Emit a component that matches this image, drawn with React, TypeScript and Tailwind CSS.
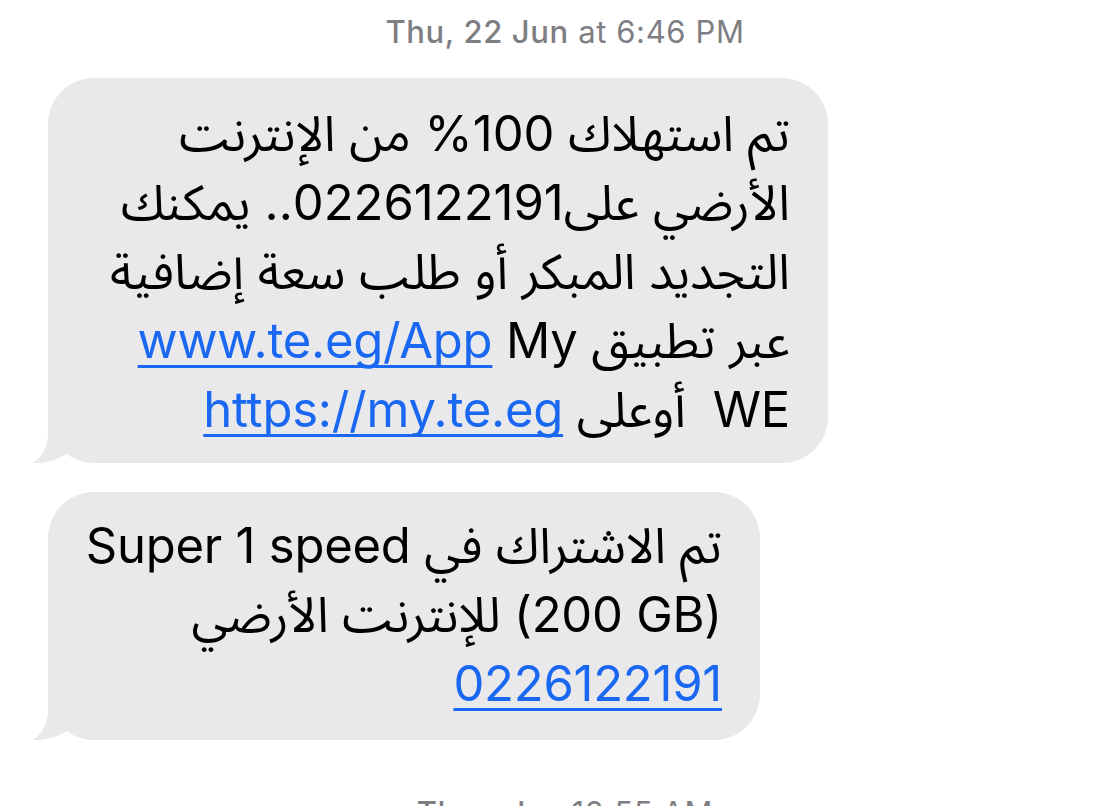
import React from 'react';

const BUBBLE = '#e9e9eb';

const Tail: React.FC = () => (
  <svg
    className="absolute -left-[20px] bottom-0"
    width="40"
    height="50"
    viewBox="0 0 40 50"
    aria-hidden="true"
  >
    <path d="M20 0 L20 20 C20 34 14 44 5 50 C17 50.5 30 47 40 40 L40 0 Z" fill={BUBBLE} />
  </svg>
);

const Link: React.FC<{ children: React.ReactNode }> = ({ children }) => (
  <a className="text-[#1a68f2] underline decoration-[3px] underline-offset-[7px] [text-decoration-skip-ink:none]">
    {children}
  </a>
);

const Stamp: React.FC<{ day: string; time: string }> = ({ day, time }) => (
  <div className="flex justify-center pl-[30px] text-[31px] leading-[36px] text-[#7e7e83] tracking-[0.02em]">
    <span className="font-medium">{day}</span>
    <span>&nbsp;{time}</span>
  </div>
);

const Bubble: React.FC<{ width: string; children: React.ReactNode; className?: string }> = ({
  width,
  children,
  className = '',
}) => (
  <div className={`relative ml-[48px] rounded-[46px] bg-[#e9e9eb] ${width} ${className}`}>
    <Tail />
    <div className="relative pr-[38px] text-[49px] leading-[69px] text-black tracking-[-0.005em]">{children}</div>
  </div>
);

export default function App() {
  return (
    <div
      className="h-[806px] w-[1100px] overflow-hidden bg-white pt-[14px]"
      style={{ fontFamily: 'Inter, "Noto Sans Arabic", "Noto Naskh Arabic", "DejaVu Sans", sans-serif' }}
    >
      <Stamp day="Thu, 22 Jun" time="at 6:46 PM" />

      <Bubble width="w-[780px]" className="mt-[28px] pt-[21px] pb-[19px]">
        <div dir="rtl" className="whitespace-nowrap">تم استهلاك 100% من الإنترنت</div>
        <div dir="rtl" className="whitespace-nowrap">الأرضي على0226122191.. يمكنك</div>
        <div dir="rtl" className="whitespace-nowrap">التجديد المبكر أو طلب سعة إضافية</div>
        <div dir="rtl" className="whitespace-nowrap">
          عبر تطبيق <bdi>My</bdi> <bdi><Link>www.te.eg/App</Link></bdi>
        </div>
        <div dir="rtl" className="whitespace-pre">
          <bdi>WE</bdi>  أوعلى <bdi><Link>https://my.te.eg</Link></bdi>
        </div>
      </Bubble>

      <Bubble width="w-[712px]" className="mt-[29px] pt-[19px] pb-[22px]">
        <div dir="rtl" className="whitespace-nowrap">تم الاشتراك في Super 1 speed</div>
        <div dir="rtl" className="whitespace-nowrap">
          <bdi dir="ltr">(200 GB)</bdi> للإنترنت الأرضي
        </div>
        <div dir="rtl" className="whitespace-nowrap">
          <Link>0226122191</Link>
        </div>
      </Bubble>

      <div className="mt-[55px]">
        <Stamp day="Thursday" time="10:55 AM" />
      </div>
    </div>
  );
}
